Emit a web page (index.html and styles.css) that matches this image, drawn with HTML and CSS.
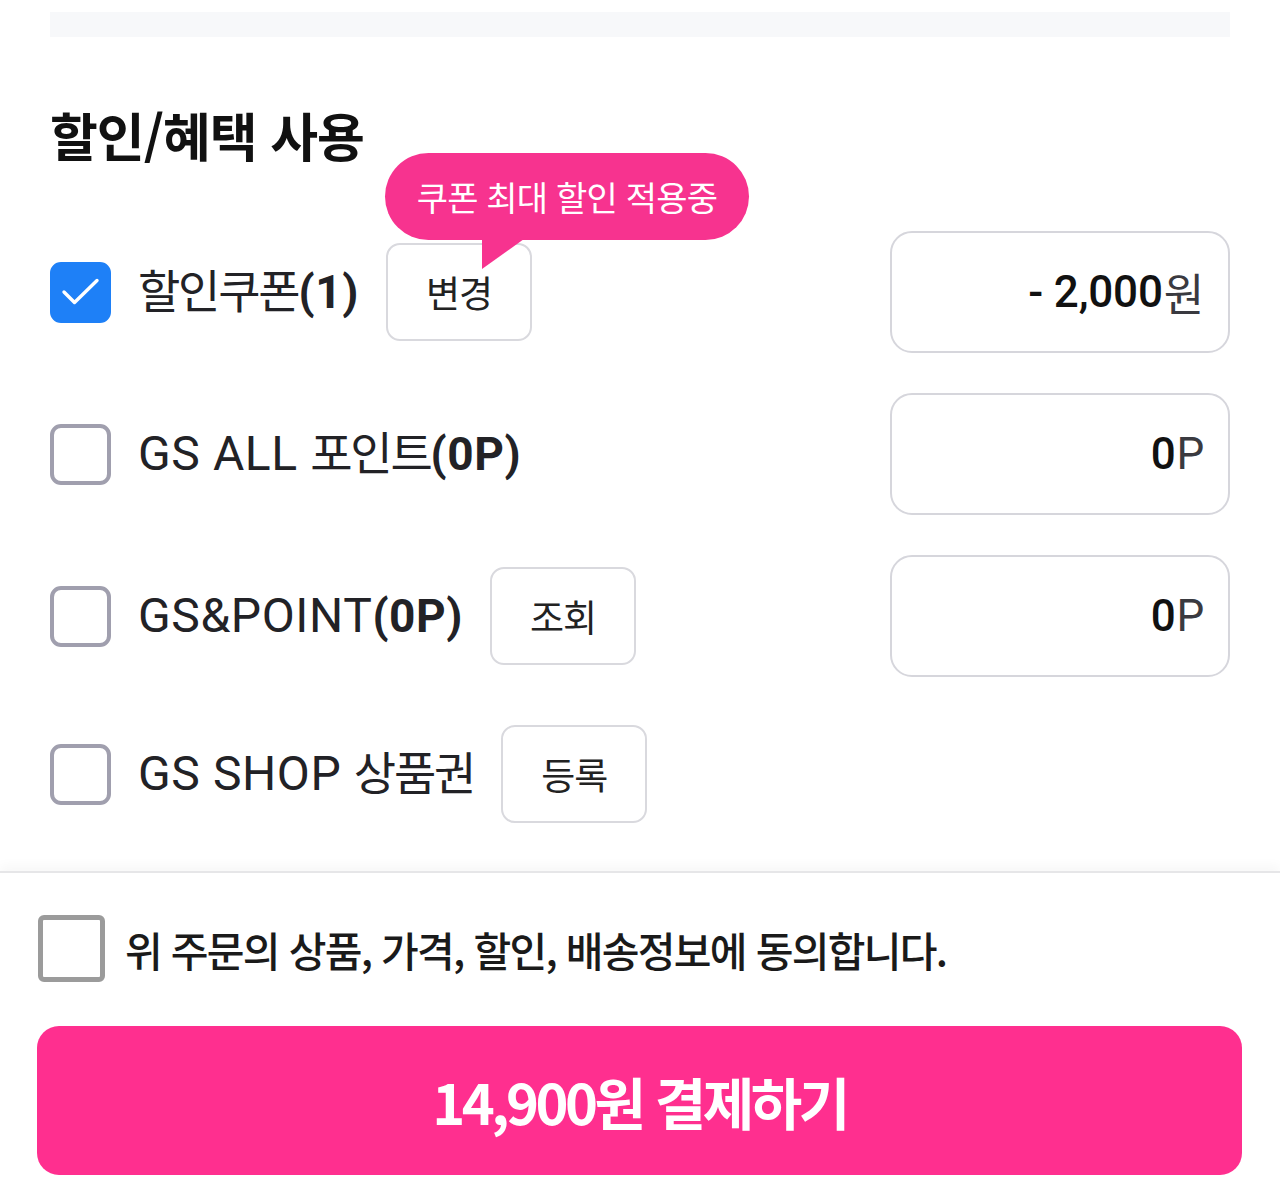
FILE: index.html
```html
<!DOCTYPE html>
<html lang="ko">
<head>
<meta charset="utf-8">
<title>할인/혜택 사용</title>
<link rel="stylesheet" href="styles.css">
</head>
<body>
<div class="page">
  <div class="top-strip"></div>
  <section class="benefit">
    <h2 class="title">할인/혜택 사용</h2>
    <div class="rows">
      <div class="row">
        <div class="row-left">
          <span class="check check-on">
            <svg width="61" height="61" viewBox="0 0 61 61"><path d="M14 30 L24.5 40.5 L47 18.5" fill="none" stroke="#fff" stroke-width="3.4" stroke-linecap="round" stroke-linejoin="round"/></svg>
          </span>
          <span class="label">할인쿠폰<b>(1)</b></span>
          <span class="btn-wrap">
            <span class="tip">쿠폰 최대 할인 적용중</span>
            <button class="small-btn">변경</button>
          </span>
        </div>
        <div class="amount"><b>- 2,000</b>원</div>
      </div>
      <div class="row">
        <div class="row-left">
          <span class="check"></span>
          <span class="label"><span class="en">GS ALL </span>포인트<b>(0P)</b></span>
        </div>
        <div class="amount"><b>0</b>P</div>
      </div>
      <div class="row">
        <div class="row-left">
          <span class="check"></span>
          <span class="label"><span class="en">GS&amp;POINT</span><b>(0P)</b></span>
          <button class="small-btn">조회</button>
        </div>
        <div class="amount"><b>0</b>P</div>
      </div>
      <div class="row row-last">
        <div class="row-left">
          <span class="check"></span>
          <span class="label"><span class="en">GS SHOP </span>상품권</span>
          <button class="small-btn">등록</button>
        </div>
      </div>
    </div>
  </section>
  <footer class="footer">
    <label class="agree">
      <span class="agree-box"></span>
      <span class="agree-text">위 주문의 상품, 가격, 할인, 배송정보에 동의합니다.</span>
    </label>
    <button class="pay">14,900원 결제하기</button>
  </footer>
</div>
</body>
</html>
```

FILE: styles.css
```css
* { box-sizing: border-box; }
html, body { margin: 0; padding: 0; background: #fff; }
body {
  font-family: Roboto, "Noto Sans CJK KR", sans-serif;
  color: #1b1b1f;
  width: 1280px;
}
.page { width: 1280px; }
.top-strip {
  height: 25px;
  margin: 12px 50px 0;
  background: #f7f8fa;
}
.benefit { padding: 0 50px 0 50px; }
.title {
  margin: 62px 0 0;
  font-family: "Noto Sans CJK KR", sans-serif;
  font-weight: 700;
  font-size: 52px;
  line-height: 72px;
  letter-spacing: -1px;
  color: #111;
}
.rows {
  display: flex;
  flex-direction: column;
  gap: 40px;
  margin-top: 60px;
}
.row {
  display: flex;
  align-items: center;
  justify-content: space-between;
  min-height: 122px;
}
.row-last { min-height: 114px; }
.row-left {
  display: flex;
  align-items: center;
}
.check {
  width: 61px;
  height: 61px;
  border: 4px solid #a09fae;
  border-radius: 11px;
  display: flex;
  align-items: center;
  justify-content: center;
  flex-shrink: 0;
  background: #fff;
  position: relative;
}
.check svg { position: absolute; left: -4px; top: -4px; }
.check-on {
  background: #1e80f7;
  border-color: #1e80f7;
}
.label {
  margin-left: 27px;
  font-size: 46px;
  letter-spacing: -2.2px;
  color: #222226;
  line-height: 60px;
  white-space: pre;
}
.label .en { letter-spacing: 0.6px; font-size: 48px; }
.label b { font-weight: 700; letter-spacing: 0.6px; }
.btn-wrap { position: relative; display: flex; margin-left: 27px; }
.small-btn {
  margin-left: 27px;
  width: 146px;
  height: 98px;
  border: 2px solid #d9d9de;
  border-radius: 14px;
  background: #fff;
  font-family: "Noto Sans CJK KR", sans-serif;
  font-size: 37px;
  letter-spacing: -1px;
  color: #222;
  padding: 0;
}
.btn-wrap .small-btn { margin-left: 0; }
.tip {
  position: absolute;
  left: -1px;
  top: -90px;
  width: 364px;
  height: 87px;
  border-radius: 44px;
  background: #f7338f;
  color: #fff;
  font-family: "Noto Sans CJK KR", sans-serif;
  font-size: 34px;
  letter-spacing: -0.8px;
  display: flex;
  align-items: center;
  justify-content: center;
  white-space: nowrap;
  z-index: 2;
}
.tip::after {
  content: "";
  position: absolute;
  left: 97px;
  top: 86px;
  width: 0;
  height: 0;
  border-left: 0 solid transparent;
  border-right: 42px solid transparent;
  border-top: 30px solid #f7338f;
}
.amount {
  width: 340px;
  height: 122px;
  border: 2px solid #d6d6dc;
  border-radius: 22px;
  display: flex;
  align-items: center;
  justify-content: flex-end;
  padding-right: 24px;
  font-size: 44px;
  letter-spacing: -0.2px;
  color: #3a3a40;
}
.amount b { font-weight: 500; color: #111; margin-right: 1px; }
.footer {
  margin-top: 40px;
  border-top: 2px solid #e6e6e8;
  box-shadow: 0 -6px 10px rgba(0,0,0,0.03);
  padding: 42px 38px 12px 37px;
}
.agree {
  display: flex;
  align-items: center;
}
.agree-box {
  width: 67px;
  height: 67px;
  border: 5px solid #9b9b9b;
  border-radius: 6px;
  flex-shrink: 0;
  margin-left: 1px;
}
.agree-text {
  margin-left: 20px;
  font-family: "Noto Sans CJK KR", sans-serif;
  font-weight: 500;
  font-size: 41px;
  letter-spacing: -1.7px;
  color: #1a1a1a;
}
.pay {
  display: block;
  margin-top: 44px;
  width: 100%;
  height: 149px;
  border: none;
  border-radius: 22px;
  background: #ff2f8f;
  color: #fff;
  font-family: "Noto Sans CJK KR", sans-serif;
  font-weight: 700;
  font-size: 56px;
  letter-spacing: -3.5px;
}
```
